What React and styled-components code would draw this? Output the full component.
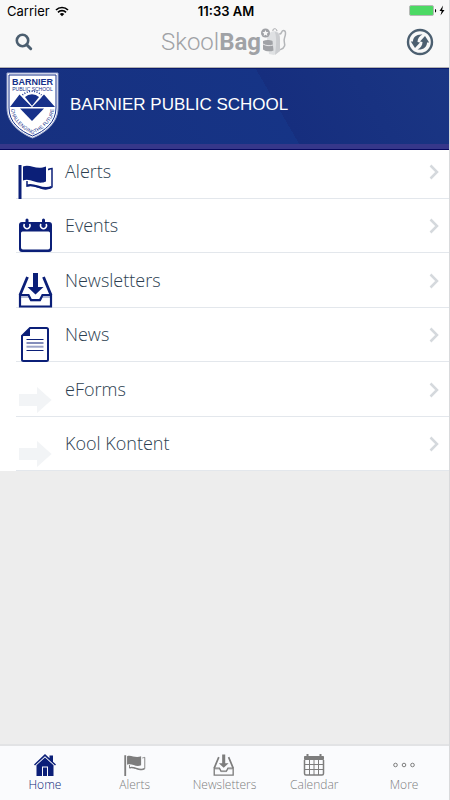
import React from "react";
import styled, { createGlobalStyle } from "styled-components";

const navy = "#0b1f78";
const slate = "#4c5f70";

const FlagIcon = () => (
  <svg viewBox="0 0 36 36" fill="currentColor">
    <path d="M0.500 2h3v34h-3z" />
    <path d="M5 3.500c7-3 13 4 23 0v15c-9 4-15-4-23-1z" />
    <path
      d="M30 6.500c1.500 0 2-1 4-1V24c-9 6-15-4-25-1v-5"
      fill="none"
      stroke="currentColor"
      strokeWidth="1.500"
    />
    <path
      d="M9 22.500c8-3 15 6 24.500 1.500"
      fill="none"
      stroke="currentColor"
      strokeWidth="2"
    />
  </svg>
);

const EventIcon = () => (
  <svg viewBox="0 0 36 36" fill="currentColor">
    <path
      fillRule="evenodd"
      d="M4 5h27a3 3 0 0 1 3 3v24a3 3 0 0 1-3 3H4a3 3 0 0 1-3-3V8a3 3 0 0 1 3-3zM4.500 14.500A1.500 1.500 0 0 0 3 16v14.500a2 2 0 0 0 2 2h25a2 2 0 0 0 2-2V16a1.500 1.500 0 0 0-1.500-1.500z"
    />
    <path
      d="M6.500 7a3 3 0 1 0 5 0M23 7a3 3 0 1 0 5 0"
      fill="none"
      stroke="#fff"
      strokeWidth="1.500"
    />
    <path d="M7.500 3a1.500 1.500 0 0 1 3 0v6h-3zM24 3a1.500 1.500 0 0 1 3 0v6h-3z" />
  </svg>
);

const InboxIcon = () => (
  <svg viewBox="0 0 36 36" fill="none" stroke="currentColor" strokeWidth="2.200">
    <path d="M2 23h8.500l2.500 5h9l2.500-5H33v11.500H2z" />
    <path d="M2 23 9.500 5M33 23 25.500 5" strokeWidth="2.800" />
    <path d="M3 25h8l2 4h9l2-4h8" strokeWidth="1.500" opacity="0.400" />
    <path
      d="M15 1h5v14h5.500l-8 7.500L9.500 15H15z"
      fill="currentColor"
      stroke="none"
    />
  </svg>
);

const NewsIcon = () => (
  <svg viewBox="0 0 36 36" fill="none" stroke="currentColor" strokeWidth="2">
    <path d="M12 2h16.500A1.500 1.500 0 0 1 30 3.500v30a1.500 1.500 0 0 1-1.500 1.500h-23A1.500 1.500 0 0 1 4 33.500V10z" />
    <path d="M12 2v8H4z" fill="currentColor" stroke="none" />
    <path d="M8.500 13.500h17M8.500 17h17M8.500 24.500h17" strokeWidth="1.200" />
    <path d="M8.500 20.700h17" opacity="0.400" />
  </svg>
);

const ArrowIcon = () => (
  <svg viewBox="0 0 36 36" fill="#f2f4f6">
    <path d="M1 13h18V6l14.500 13L19 32v-7H1z" />
  </svg>
);

const HomeIcon = () => (
  <svg viewBox="0 0 22 22" fill="currentColor">
    <path d="M11 0 0 10.500l1 1L11 2.200l10 9.300 1-1-3-2.800V1.500h-3.500v2.800z" />
    <path d="M11 3.400 2.500 11.300V22H8v-9.500h6V22h5.500V11.300z" />
    <path d="M9 13.500h4V22H9z" />
  </svg>
);

const CalendarIcon = () => (
  <svg viewBox="0 0 22 22" fill="none" stroke="currentColor">
    <path d="M4.500 0v3M17.500 0v3" strokeWidth="2" />
    <path d="M1.500 2.500h19v3h-19z" fill="currentColor" />
    <path
      d="M1.500 6v13.500a1.500 1.500 0 0 0 1.500 1.500h16a1.500 1.500 0 0 0 1.500-1.500V6"
      strokeWidth="1.500"
    />
    <path d="M6.500 6v15M11 6v15M15.500 6v15M2 10.500h18M2 15.500h18" />
  </svg>
);

const MoreIcon = () => (
  <svg viewBox="0 0 22 22" fill="none" stroke="currentColor">
    <circle cx="2.500" cy="11" r="1.800" />
    <circle cx="11" cy="11" r="1.800" />
    <circle cx="19.500" cy="11" r="1.800" />
  </svg>
);

const BagIcon = () => (
  <svg width="26" height="28" viewBox="0 0 26 28">
    <path
      d="M18 6c3 1 2-3.500 4.500-3.500S25 6 23.500 10s1 5 0 8-3 3-5 4"
      fill="none"
      stroke="#b4b6b9"
      strokeWidth="1.500"
    />
    <path d="M6 11c0-5 4-8 8-8s5 4 5 8v12l-6 4-5-1z" fill="#dfe1e3" />
    <path d="M14 4c4 0 5 4 5 8v11l-5 4c1-8 2-16 0-23z" fill="#cbcdd0" />
    <path d="M12 3c-1-3 4-3 4 0" fill="none" stroke="#a5a7aa" />
    <path d="M2 13c3-1.500 7-1 9.500 0l1 9.500c-3 1.500-8 1-10.500-1z" fill="#a0a2a6" />
    <path d="M2 16c3 2 7 2 10 1" fill="none" stroke="#e7e8ea" />
    <circle cx="4.500" cy="5" r="4.500" fill="#a0a2a6" />
    <path
      d="m4.500 2 .9 2 2.200.2-1.700 1.500.5 2.200-1.900-1.200-1.900 1.200.5-2.200L1.400 4.200 3.600 4z"
      fill="#f8f8f8"
    />
  </svg>
);

const Crest = () => (
  <svg width="54" height="68" viewBox="0 0 54 68">
    <path
      d="M1 1h51v35c0 15-13 25-25.500 30C14 61 1 51 1 36z"
      fill="#fff"
      stroke="#9aa5cf"
    />
    <path
      d="M3 3h47v33c0 14-11 23-23.500 28C14 59 3 50 3 36z"
      fill="none"
      stroke="#17318a"
    />
    <text x="26.500" y="13" fontSize="9" fontWeight="700">
      BARNIER
    </text>
    <text x="26.500" y="19" fontSize="5">
      PUBLIC SCHOOL
    </text>
    <path d="M19 25a10 10 0 0 1 14 0l-7 9z" />
    <path d="M4 35 13.500 22.500 26 35 38 22.500 49 35z" />
    <path d="M14 36.500h24L26 49z" />
    <path
      d="M16.500 23a14 14 0 0 1 19 0"
      fill="none"
      stroke="#17318a"
      strokeWidth="1.500"
      strokeDasharray="1 1.500"
    />
    <path
      d="M17 25.500 26 34.500l9-9"
      fill="none"
      stroke="#fff"
      strokeWidth="0.800"
    />
    <path id="motto" d="M5 37c1 12 11 20 21.500 25C38 57 47 49 48 37" fill="none" />
    <text fontSize="5">
      <textPath href="#motto" startOffset="50%">
        CHALLENGING THE FUTURE
      </textPath>
    </text>
  </svg>
);

const rows = [
  { label: "Alerts", Icon: FlagIcon },
  { label: "Events", Icon: EventIcon },
  { label: "Newsletters", Icon: InboxIcon },
  { label: "News", Icon: NewsIcon },
  { label: "eForms", Icon: ArrowIcon },
  { label: "Kool Kontent", Icon: ArrowIcon },
];

const tabs = [
  { label: "Home", Icon: HomeIcon, active: true },
  { label: "Alerts", Icon: FlagIcon },
  { label: "Newsletters", Icon: InboxIcon },
  { label: "Calendar", Icon: CalendarIcon },
  { label: "More", Icon: MoreIcon },
];

function App() {
  return (
    <Screen>
      <GlobalStyle />
      <Header>
        <StatusBar>
          <Carrier>
            Carrier
            <svg width="14" height="11" viewBox="0 0 14 11" fill="none">
              <path
                d="M1 4a8.500 8.500 0 0 1 12 0M3 6.300a5.600 5.600 0 0 1 8 0"
                stroke="#000"
                strokeWidth="1.700"
              />
              <path d="M4.700 8a3.300 3.300 0 0 1 4.600 0L7 10.300z" fill="#000" />
            </svg>
          </Carrier>
          <Time>11:33 AM</Time>
          <Battery>
            <svg width="36" height="12" viewBox="0 0 36 12">
              <rect
                x="0.500"
                y="0.500"
                width="24"
                height="10"
                rx="1.500"
                fill="#4cd964"
                stroke="#b5b9b6"
              />
              <path d="M26 4c1.500 0 1.500 3.500 0 3.500z" />
              <path d="M34 0.500 30.500 6h2.200l-1.200 4.500L35.500 5h-2.300z" />
            </svg>
          </Battery>
        </StatusBar>
        <Toolbar>
          <IconButton aria-label="Search">
            <svg width="18" height="18" viewBox="0 0 18 18" fill="none" stroke={slate}>
              <circle cx="7.500" cy="7.500" r="5.700" strokeWidth="2.600" />
              <path d="m11.700 11.700 4 4" strokeWidth="3" strokeLinecap="round" />
            </svg>
          </IconButton>
          <Brand>
            <span>
              Skool<b>Bag</b>
            </span>
            <BagIcon />
          </Brand>
          <IconButton aria-label="Refresh">
            <svg width="28" height="28" viewBox="0 0 28 28" fill={slate}>
              <circle
                cx="14"
                cy="14"
                r="12"
                fill="none"
                stroke={slate}
                strokeWidth="2.400"
              />
              <path d="M16.500 6.500C10.500 6 7 9 7 13.500H4.800L9 20l5-5.500-2.500-.5c0-3.500 2-6 5-7.500z" />
              <path d="M11.500 21.500c6 .5 9.500-2.500 9.500-7h2.200L19 8l-5 5.500 2.500.5c0 3.500-2 6-5 7.500z" />
            </svg>
          </IconButton>
        </Toolbar>
      </Header>
      <Banner>
        <Crest />
        <h1>BARNIER PUBLIC SCHOOL</h1>
      </Banner>
      <Menu>
        {rows.map(({ label, Icon }) => (
          <MenuRow key={label}>
            <MenuLink href="#">
              <Icon />
              <span>{label}</span>
              <Chevron viewBox="0 0 10 16">
                <path d="m1.500 1.500 6.500 6.500-6.500 6.500" />
              </Chevron>
            </MenuLink>
          </MenuRow>
        ))}
      </Menu>
      <TabBar>
        {tabs.map(({ label, Icon, active }) => (
          <Tab key={label} href="#" $active={active}>
            <Icon />
            {label}
          </Tab>
        ))}
      </TabBar>
    </Screen>
  );
}

export default App;

const GlobalStyle = createGlobalStyle`
  * {
    box-sizing: border-box;
  }

  body {
    margin: 0;
    background: #ededed;
  }
`;

const Screen = styled.div`
  display: flex;
  flex-direction: column;
  min-height: 100vh;
  border-right: 1px solid #d9dadc;
  font-family: "Open Sans", sans-serif;
`;

const Header = styled.header`
  background: #f8f8f8;
  border-bottom: 1px solid #b2b2b2;
`;

const StatusBar = styled.div`
  display: grid;
  grid-template-columns: 1fr auto 1fr;
  align-items: center;
  height: 22px;
  padding: 0 4px 0 7px;
  font-family: Inter, sans-serif;
  font-size: 13px;
  color: #000;
`;

const Carrier = styled.div`
  display: flex;
  align-items: center;
  gap: 5px;
`;

const Time = styled.div`
  font-weight: 600;
`;

const Battery = styled.div`
  display: flex;
  justify-content: flex-end;
`;

const Toolbar = styled.div`
  display: flex;
  justify-content: space-between;
  align-items: center;
  height: 45px;
  padding: 0 15px 5px 10px;
`;

const IconButton = styled.button`
  display: flex;
  align-items: center;
  justify-content: center;
  width: 28px;
  height: 28px;
  padding: 0;
  border: 0;
  background: none;
`;

const Brand = styled.div`
  display: flex;
  align-items: center;
  padding-left: 4px;
  font-family: Roboto, sans-serif;
  font-size: 24px;
  font-weight: 300;
  color: #a0a2a6;

  b {
    font-weight: 700;
  }
`;

const Banner = styled.div`
  display: flex;
  align-items: center;
  gap: 10px;
  height: 82px;
  padding: 0 6px;
  border-top: 1px solid #0a1a6c;
  border-bottom: 1px solid #06085f;
  background:
    linear-gradient(#36378a, #36378a) bottom / 100% 5px no-repeat,
    linear-gradient(60deg, #17307f, #163486 61%, #162e7e 61%, #1a3684);

  > svg {
    margin-bottom: 6px;
    fill: #17318a;
    font-family: "Liberation Sans", sans-serif;
    text-anchor: middle;
  }

  > h1 {
    margin: 0 0 8px;
    font-family: "Liberation Sans", sans-serif;
    font-size: 17px;
    font-weight: 400;
    color: #fff;
  }
`;

const Menu = styled.ul`
  display: grid;
  grid-template-rows: 49px repeat(5, 1fr);
  min-height: 321px;
  margin: 0;
  padding: 0 0 0 16px;
  list-style: none;
  background: #fff;
`;

const MenuRow = styled.li`
  display: flex;
  align-items: flex-end;
  background: linear-gradient(#e3e7ec, #e3e7ec) bottom / 100% 1px no-repeat;
`;

const MenuLink = styled.a`
  flex: 1;
  display: flex;
  align-items: center;
  height: 54px;
  padding-right: 10px;
  font-size: 18px;
  font-weight: 300;
  color: #2c3e50;
  text-decoration: none;

  > svg:first-child {
    align-self: flex-end;
    width: 36px;
    height: 36px;
    margin: 0 11px 0 2px;
    color: ${navy};
  }

  > span {
    flex: 1;
    padding-bottom: 2px;
  }
`;

const Chevron = styled.svg`
  width: 10px;
  height: 16px;
  fill: none;
  stroke: #d5d9dd;
  stroke-width: 2.5px;
`;

const TabBar = styled.nav`
  display: grid;
  grid-template-columns: repeat(5, 1fr);
  margin-top: auto;
  height: 56px;
  border-top: 2px solid #e2e3e5;
  background: #fafbfd;
`;

const Tab = styled.a`
  display: flex;
  flex-direction: column;
  align-items: center;
  padding-top: 8px;
  font-size: 12px;
  line-height: 18px;
  font-weight: 300;
  color: ${(props) => (props.$active ? navy : "#7d7d7d")};
  text-decoration: none;

  > svg {
    width: 22px;
    height: 22px;
  }
`;
